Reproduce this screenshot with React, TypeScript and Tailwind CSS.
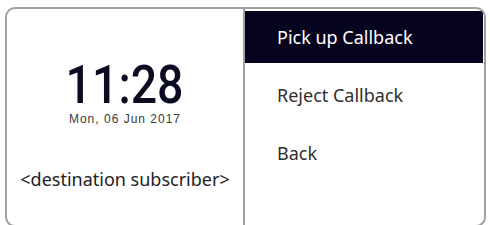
import React from "react";

export default function App() {
  const items = ["Pick up Callback", "Reject Callback", "Back"];
  return (
    <div className="w-[490px] h-[225px] bg-white overflow-hidden pt-[7px] pl-[5px]">
      <div className="w-[481px] h-[220px] border-2 border-[#a0a0a0] rounded-[10px] flex overflow-hidden">
        <div className="w-[238px] shrink-0 border-r-2 border-[#a0a0a0] flex flex-col items-center pt-[50px] pb-[35px]">
          <div
            className="h-[52px] leading-[52px] text-[54px] font-medium text-[#0b0b22] scale-x-[0.86]"
            style={{ fontFamily: 'Roboto, "Liberation Sans", Arial, sans-serif' }}
          >
            11:28
          </div>
          <div
            className="mt-[1px] text-[12px] leading-[14px] tracking-[1px] text-[#3a3a3a]"
            style={{ fontFamily: '"Liberation Sans", Arial, sans-serif' }}
          >
            Mon, 06 Jun 2017
          </div>
          <div
            className="mt-auto text-[18px] leading-[22px] text-[#222]"
            style={{ fontFamily: '"Noto Sans", "Open Sans", sans-serif' }}
          >
            &lt;destination subscriber&gt;
          </div>
        </div>
        <div
          className="flex-1 flex flex-col gap-[6px] pt-[2px] pr-[1px]"
          style={{ fontFamily: '"Noto Sans", "Open Sans", sans-serif' }}
        >
          {items.map((t, i) => (
            <div
              key={t}
              className={
                i === 0
                  ? "h-[52px] flex items-center pl-[32px] text-[18px] bg-[#07041f] text-white"
                  : "h-[52px] flex items-center pl-[32px] text-[18px] text-[#2e2e2e]"
              }
            >
              {t}
            </div>
          ))}
        </div>
      </div>
    </div>
  );
}
